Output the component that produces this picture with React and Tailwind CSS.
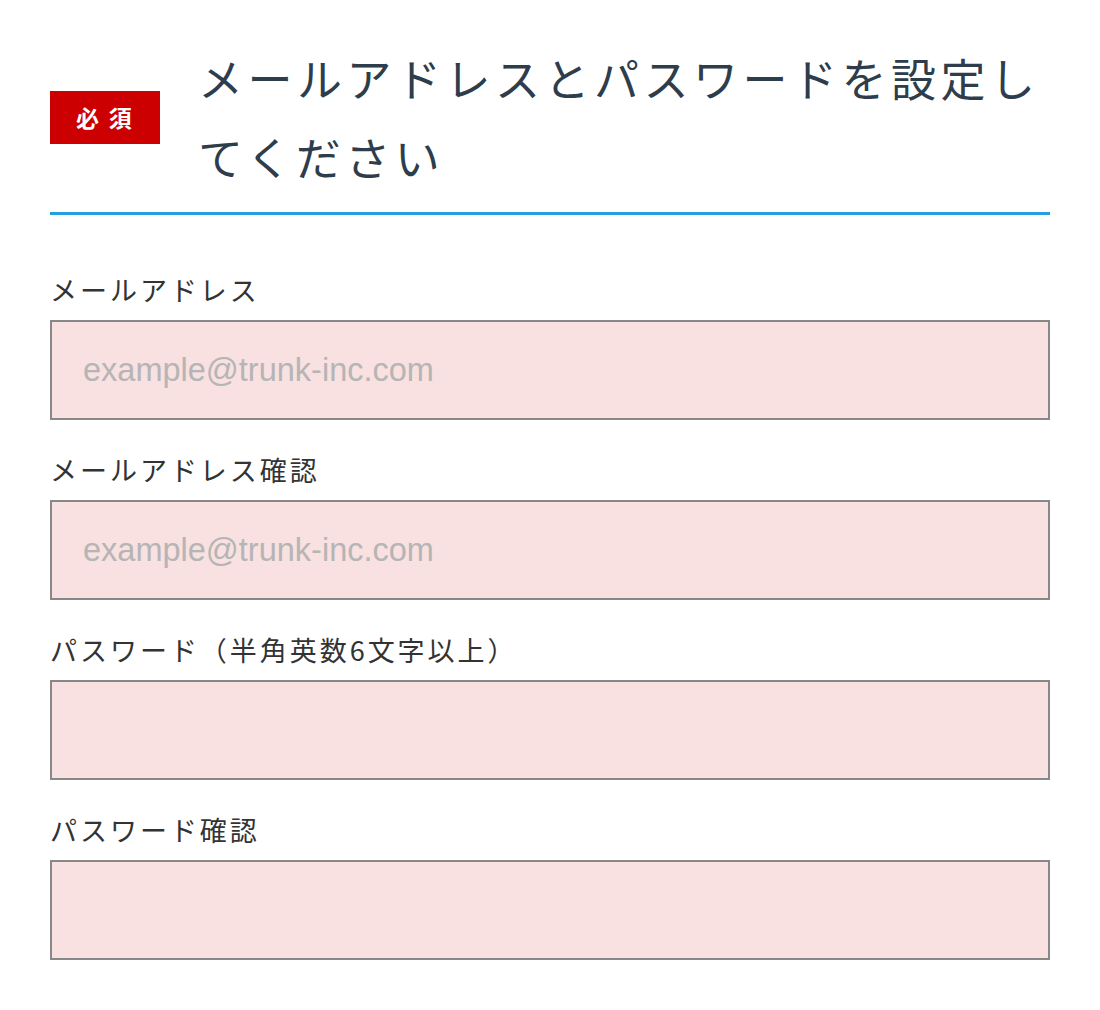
import React from "react";

const jp = { fontFamily: '"Noto Sans CJK JP", "Noto Sans", sans-serif' };

function Field({ label, placeholder, type = "text" }) {
    return (
        <div className="flex flex-col">
            <label className="text-[27px] leading-[40px] tracking-[0.11em] text-[#333]" style={jp}>{label}</label>
            <input
                type={type}
                placeholder={placeholder}
                className="mt-[10px] h-[100px] w-full border-2 border-[#888] bg-[#f9e0e1] pl-[31px] text-[32.5px] text-[#333] outline-none placeholder:text-[#b5b5b5]"
                style={{ fontFamily: '"Liberation Sans", Arial, sans-serif' }}
            />
        </div>
    );
}

export default function App() {
    return (
        <div className="bg-white min-h-[1010px] px-[50px]">
            <div className="flex items-center pt-[38px] pb-[16px] border-b-[3px] border-[#259ee0]" style={jp}>
                <div className="flex h-[53px] w-[110px] shrink-0 items-center justify-center bg-[#cc0000] text-[23px] font-bold text-white tracking-[0.1em]">
                    必 須
                </div>
                <h1 className="ml-[38px] text-[45px] leading-[79px] tracking-[0.1em] text-[#2e3d4c] font-normal">
                    メールアドレスとパスワードを設定してください
                </h1>
            </div>
            <form className="mt-[55px] flex flex-col gap-[30px]">
                <Field label="メールアドレス" placeholder="example@trunk-inc.com" />
                <Field label="メールアドレス確認" placeholder="example@trunk-inc.com" />
                <Field label="パスワード（半角英数6文字以上）" type="password" />
                <Field label="パスワード確認" type="password" />
            </form>
        </div>
    );
}
